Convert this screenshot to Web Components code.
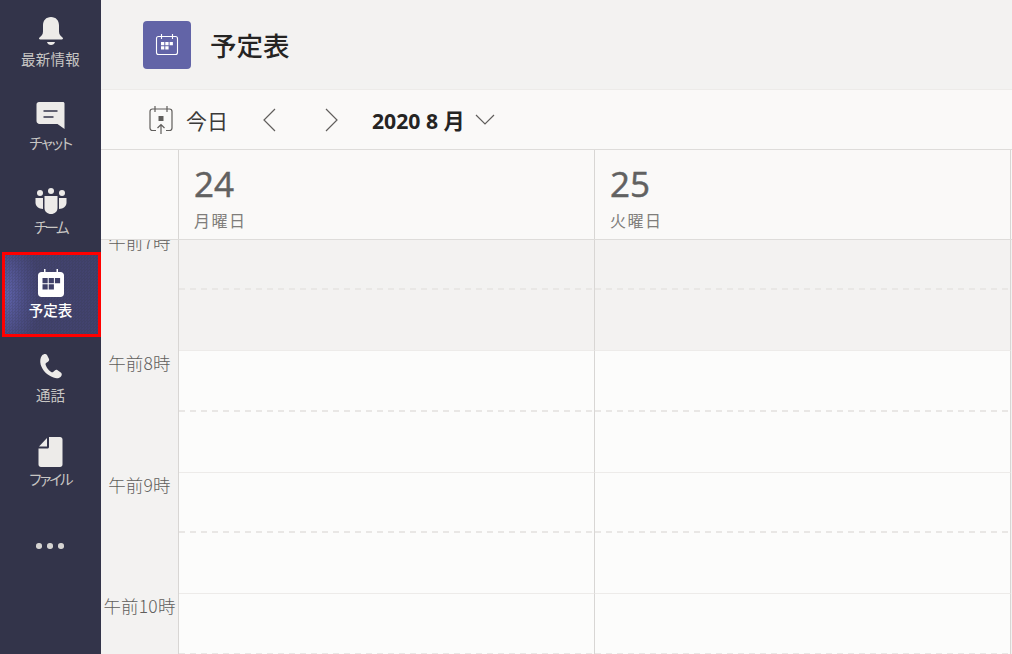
<!DOCTYPE html>
<html lang="ja">
<head>
<meta charset="UTF-8" />
<title>予定表</title>
<style>
  html, body { margin: 0; height: 100%; overflow: hidden; }
  body { font-family: "Open Sans", "Noto Sans CJK JP", sans-serif; }
</style>
</head>
<body>
<teams-app>
  <app-rail slot="rail">
    <rail-item label="最新情報" style="--tight: 0.200px">
      <svg width="30" height="32" viewBox="0 0 30 32"><path fill="#edebe9" d="M15 1c-5 0-8 3.500-8 8.500v6c0 3-1.500 4.500-3.500 6-1 .8-.5 2 .8 2h21.400c1.300 0 1.800-1.200.8-2-2-1.500-3.500-3-3.500-6v-6C23 4.500 20 1 15 1z"/><path fill="#edebe9" d="M11 26h8c-.5 2-2 3-4 3s-3.500-1-4-3z"/></svg>
    </rail-item>
    <rail-item label="チャット" style="--tight: -1.200px">
      <svg width="30" height="32" viewBox="0 0 30 32"><path fill="#edebe9" d="M.5 4.500C.5 3 1.500 2 3 2h24c.8 0 1.500.7 1.500 1.500V29l-7-5H3.500c-1.600 0-3-1.400-3-3z"/><path stroke="#33344a" stroke-width="1.500" d="M7.500 11h14M7.500 17h10" fill="none"/></svg>
    </rail-item>
    <rail-item label="チーム" style="--tight: -2.500px">
      <svg width="32" height="32" viewBox="0 0 32 32"><g fill="#edebe9"><circle cx="5" cy="9" r="3"/><circle cx="16" cy="7" r="3"/><circle cx="27" cy="9" r="3"/><path d="M.5 14h7.500v11c-4 0-7.500-3-7.500-6z"/><path d="M31.500 14H24v11c4 0 7.500-3 7.500-6z"/><path d="M9.500 12h13v12c0 3.500-2.800 6-6.500 6s-6.500-2.500-6.500-6z"/></g></svg>
    </rail-item>
    <rail-item label="予定表" active>
      <svg width="28" height="30" viewBox="0 0 28 30"><path fill="#fff" d="M7 1h1.500v3h11V1H21v3h2.500C25.500 4 27 5.500 27 7.500v18c0 2-1.500 3.500-3.500 3.500h-19C2.500 29 1 27.500 1 25.500v-18C1 5.500 2.500 4 4.500 4H7z"/><path fill="#3f4068" d="M5.500 10h5.200v5.200H5.500zM11.700 10h5.200v5.200h-5.200zM17.900 10h5.200v5.200h-5.200zM5.500 16.200h5.200v5.200H5.500zM11.700 16.200h5.200v5.200h-5.200z"/></svg>
    </rail-item>
    <rail-item label="通話">
      <svg width="30" height="32" viewBox="0 0 30 32"><path fill="#edebe9" d="M6 3.500C7.500 2 10 1.500 11 3l2 4c.4 1 0 2-1 2.700l-2 1.300c-.6.500-.5 1.500-.2 2.300 1 2.700 2.800 5 5 6.500.7.500 1.700.8 2.300.3l1.700-1.600c.9-.8 1.900-.8 2.800-.2l3.500 2.400c1.200 1 .8 3-.6 4.300-1.700 1.500-4.300 1.700-7 .6C11 23 6.500 18.500 4.700 12.700 3.800 9 4.300 5.500 6 3.500z"/></svg>
    </rail-item>
    <rail-item label="ファイル" style="--tight: -2px">
      <svg width="30" height="32" viewBox="0 0 30 32"><path fill="#edebe9" d="M13 1h11c1.500 0 2.500 1 2.500 2.500v25c0 1.500-1 2.500-2.500 2.500H5c-1.500 0-2.500-1-2.500-2.500V12.500h9c.9 0 1.500-.6 1.500-1.500z"/><path fill="#edebe9" d="M11 2v8.500H3z"/></svg>
    </rail-item>
    <rail-more></rail-more>
  </app-rail>
  <page-header slot="main" title="予定表"></page-header>
  <cal-toolbar slot="main" month="2020 8 月"></cal-toolbar>
  <cal-head slot="main">
    <day-head date="24" weekday="月曜日"></day-head>
    <day-head date="25" weekday="火曜日"></day-head>
  </cal-head>
  <cal-body slot="main" hours="午前7時,午前8時,午前9時,午前10時"></cal-body>
</teams-app>

<script>
  // Shell: dark rail on the left, calendar stacked on the right
  class TeamsApp extends HTMLElement {
    constructor() {
      super();
      this.attachShadow({ mode: "open" });
      this.shadowRoot.innerHTML = `
        <style>
          :host { display: flex; width: 1012px; height: 654px; overflow: hidden; background: #f3f2f1; }
          .main { flex: 1; min-width: 0; display: flex; flex-direction: column; }
        </style>
        <slot name="rail"></slot>
        <div class="main"><slot name="main"></slot></div>`;
    }
  }
  customElements.define("teams-app", TeamsApp);

  class AppRail extends HTMLElement {
    constructor() {
      super();
      this.attachShadow({ mode: "open" });
      this.shadowRoot.innerHTML = `
        <style>
          :host { display: flex; flex-direction: column; width: 101px; flex: none; background: #33344a; }
        </style>
        <slot></slot>`;
    }
  }
  customElements.define("app-rail", AppRail);

  class RailItem extends HTMLElement {
    constructor() {
      super();
      this.attachShadow({ mode: "open" });
    }
    connectedCallback() {
      this.shadowRoot.innerHTML = `
        <style>
          :host {
            display: flex; flex-direction: column; align-items: center;
            box-sizing: border-box; height: 84px; padding-top: 16px;
            color: #c8c6c4; font: 14.500px/18px "Noto Sans CJK JP", sans-serif;
            font-feature-settings: "palt";
          }
          :host([active]) {
            height: 85px; margin: 0 0 -1px 2px; padding: 13px 2px 0 0;
            border: 3px solid #f00;
            background:
              repeating-conic-gradient(#33344a33 0 25%, transparent 0 50%) 0 0 / 3px 3px,
              radial-gradient(ellipse 34px 70px at 0 50%, #6064ae 0%, #4b4d84 60%, #42436e 100%) 0 0 / 100% 100% no-repeat,
              #42436e;
          }
          .icon { height: 32px; display: flex; justify-content: center; }
          .label { margin-top: 2px; letter-spacing: var(--tight, 0); }
          :host([active]) .label { color: #fff; font-weight: 500; margin-top: 1px; }
        </style>
        <div class="icon"><slot></slot></div>
        <div class="label">${this.getAttribute("label")}</div>`;
    }
  }
  customElements.define("rail-item", RailItem);

  class RailMore extends HTMLElement {
    constructor() {
      super();
      this.attachShadow({ mode: "open" });
      this.shadowRoot.innerHTML = `
        <style>
          :host { display: flex; justify-content: center; align-items: center; gap: 5.500px; height: 84px; padding-right: 1px; }
          i { width: 5.500px; height: 5.500px; border-radius: 50%; background: #d6d4d2; }
        </style>
        <i></i><i></i><i></i>`;
    }
  }
  customElements.define("rail-more", RailMore);

  class PageHeader extends HTMLElement {
    constructor() {
      super();
      this.attachShadow({ mode: "open" });
    }
    connectedCallback() {
      this.shadowRoot.innerHTML = `
        <style>
          :host {
            display: flex; align-items: center; box-sizing: border-box; flex: none;
            height: 90px; padding: 0 0 0 42px; background: #f3f2f1; border-bottom: 1px solid #edebe9;
          }
          .tile {
            width: 48px; height: 48px; border-radius: 4px; background: #6264a7;
            display: flex; align-items: center; justify-content: center;
          }
          h1 { margin: 0 0 0 19px; font: 500 26.500px/32px "Noto Sans CJK JP", sans-serif; color: #252423; }
        </style>
        <div class="tile">
          <svg width="24" height="24" viewBox="0 0 24 24" fill="none" stroke="#fff" stroke-width="1.100">
            <path d="M3.500 3.500h17c1 0 2 1 2 2v14c0 1-1 2-2 2h-17c-1 0-2-1-2-2v-14c0-1 1-2 2-2zM6.500 1v5M17.500 1v5"/>
            <path fill="#fff" stroke="none" d="M6 9h3.300v3.300H6zM10.300 9h3.300v3.300h-3.300zM14.600 9h3.300v3.300h-3.300zM6 13.300h3.300v3.300H6zM10.300 13.300h3.300v3.300h-3.300z"/>
          </svg>
        </div>
        <h1>${this.getAttribute("title")}</h1>`;
    }
  }
  customElements.define("page-header", PageHeader);

  class CalToolbar extends HTMLElement {
    constructor() {
      super();
      this.attachShadow({ mode: "open" });
    }
    connectedCallback() {
      this.shadowRoot.innerHTML = `
        <style>
          :host {
            display: flex; align-items: center; box-sizing: border-box; flex: none;
            height: 60px; padding: 0 0 0 47px; background: #faf9f8; border-bottom: 1px solid #dedcda;
            color: #252423;
          }
          svg { display: block; flex: none; }
          .today { margin: 1px 0 0 12px; font: 400 21px/26px "Noto Sans CJK JP", sans-serif; color: #3b3a39; }
          .prev { margin-left: 34px; }
          .next { margin-left: 49px; }
          .month { margin: 2px 0 0 33px; font: 700 21.200px/26px "Open Sans", "Noto Sans CJK JP", sans-serif; white-space: nowrap; color: #252423; }
          .open { margin: 1px 0 0 9px; }
        </style>
        <svg width="26" height="30" viewBox="0 0 26 30" fill="none" stroke="#605e5c" stroke-width="1.200">
          <path d="M8 25.500H4.500C3 25.500 2 24.500 2 23V6.500C2 5 3 4 4.500 4h17C23 4 24 5 24 6.500V23c0 1.500-1 2.500-2.500 2.500H18"/>
          <path d="M7 1v6M19 1v6M13 29V19.500M9.500 23l3.500-3.500 3.500 3.500"/>
          <path fill="#605e5c" stroke="none" d="M10.500 11h5v5h-5z"/>
        </svg>
        <span class="today">今日</span>
        <svg class="prev" width="14" height="24" viewBox="0 0 14 24" fill="none" stroke="#605e5c" stroke-width="1.200"><path d="M13 1 2 12l11 11"/></svg>
        <svg class="next" width="14" height="24" viewBox="0 0 14 24" fill="none" stroke="#605e5c" stroke-width="1.200"><path d="M1 1l11 11L1 23"/></svg>
        <span class="month">${this.getAttribute("month")}</span>
        <svg class="open" width="22" height="14" viewBox="0 0 22 14" fill="none" stroke="#605e5c" stroke-width="1.200"><path d="M2 2l9 9 9-9"/></svg>`;
    }
  }
  customElements.define("cal-toolbar", CalToolbar);

  // Column header row: empty gutter above the hours, then one cell per day
  class CalHead extends HTMLElement {
    constructor() {
      super();
      this.attachShadow({ mode: "open" });
      this.shadowRoot.innerHTML = `
        <style>
          :host {
            display: grid; grid-template-columns: 78px 416px 416px 1px; flex: none; box-sizing: border-box;
            height: 90px; background: #faf9f8; border-bottom: 1px solid #dedcda;
          }
          .gutter { border-right: 1px solid #d8d6d4; }
          .gutter, ::slotted(*) { box-sizing: border-box; }
        </style>
        <div class="gutter"></div>
        <slot></slot>`;
    }
  }
  customElements.define("cal-head", CalHead);

  class DayHead extends HTMLElement {
    constructor() {
      super();
      this.attachShadow({ mode: "open" });
    }
    connectedCallback() {
      this.shadowRoot.innerHTML = `
        <style>
          :host {
            display: block; box-sizing: border-box; padding: 13px 0 0 15px;
            border-right: 1px solid #d8d6d4; color: #616161;
          }
          .date { font: 400 35px/42px "Open Sans", sans-serif; -webkit-text-stroke: .5px #616161; }
          .weekday { font: 400 16px/20px "Noto Sans CJK JP", sans-serif; color: #7f7d7b; margin-top: 5px; letter-spacing: 1.500px; }
        </style>
        <div class="date">${this.getAttribute("date")}</div>
        <div class="weekday">${this.getAttribute("weekday")}</div>`;
    }
  }
  customElements.define("day-head", DayHead);

  // Scrolled time grid: the first hour is partly hidden under the header
  class CalBody extends HTMLElement {
    constructor() {
      super();
      this.attachShadow({ mode: "open" });
    }
    connectedCallback() {
      const hours = this.getAttribute("hours").split(",");
      const rows = hours
        .map((h, i) => `
          <div class="hour">${h}</div>
          <div class="cell ${i === 0 ? "off" : ""}"><b></b></div>
          <div class="cell ${i === 0 ? "off" : ""}"><b></b></div>`)
        .join("");
      this.shadowRoot.innerHTML = `
        <style>
          :host { display: block; flex: 1; min-height: 0; overflow: hidden; background: #f3f2f1; }
          .grid {
            display: grid; grid-template-columns: 78px 416px 416px;
            grid-auto-rows: 121.500px; margin-top: -11.500px;
          }
          .hour {
            box-sizing: border-box; border-right: 1px solid #d8d6d4; padding-top: 1px; text-align: center;
            font: 300 17.500px/24px "Noto Sans CJK JP", "Open Sans", sans-serif; color: #605e5c; white-space: nowrap;
            letter-spacing: .2px;
          }
          .cell {
            box-sizing: border-box; background: #fcfcfb; border-right: 1px solid #d8d6d4;
            border-top: 1px solid #edebe9;
          }
          .cell.off { background: #f3f2f1; }
          .cell b {
            display: block; height: 2px; margin-top: 58.500px;
            background: repeating-linear-gradient(90deg, #e9e7e5 0 6px, transparent 6px 11px);
          }
        </style>
        <div class="grid">${rows}</div>`;
    }
  }
  customElements.define("cal-body", CalBody);
</script>
</body>
</html>
